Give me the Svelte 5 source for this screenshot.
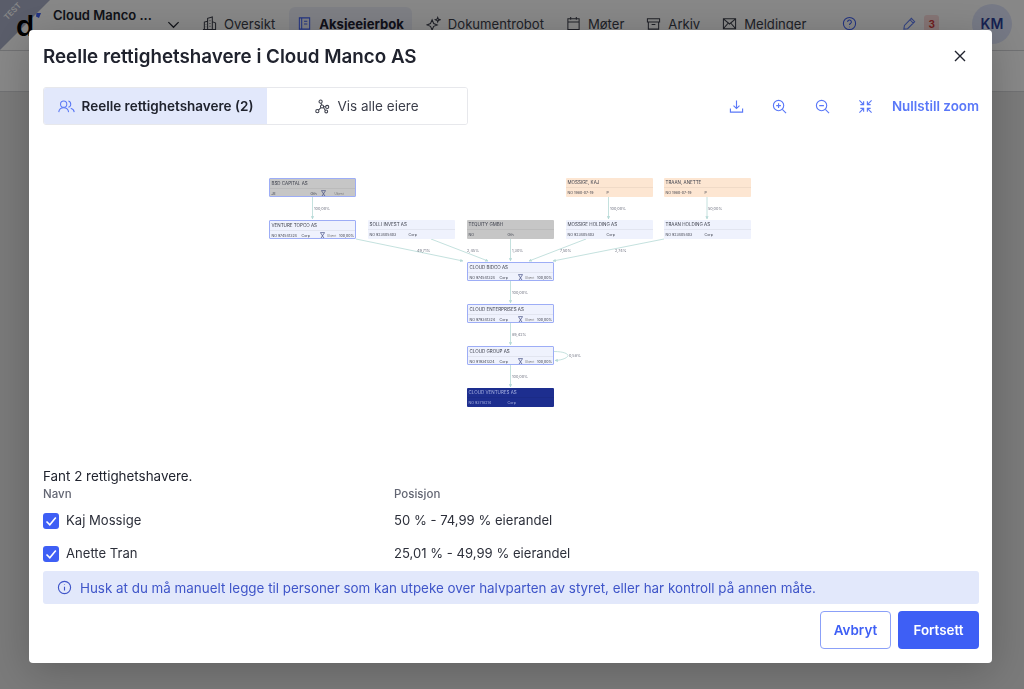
<script>
	const navItems = [
		{ label: 'Oversikt', icon: 'building' },
		{ label: 'Aksjeeierbok', icon: 'book', active: true },
		{ label: 'Dokumentrobot', icon: 'spark' },
		{ label: 'Møter', icon: 'calendar' },
		{ label: 'Arkiv', icon: 'archive' },
		{ label: 'Meldinger', icon: 'mail' }
	];

	const owners = [
		{ name: 'Kaj Mossige', position: '50 % - 74,99 % eierandel' },
		{ name: 'Anette Tran', position: '25,01 % - 49,99 % eierandel' }
	];

	// graph coordinates are relative to the canvas
	const ox = 29;
	const oy = 125;
	const nodes = [
		{ x: 269, y: 178, name: 'BSD CAPITAL AS', id: 'JE', type: 'Oth', kind: 'grey border', extra: 'Ukjent' },
		{ x: 566, y: 178, name: 'MOSSIGE, KAJ', id: 'NO 1980-07-19', type: 'P', kind: 'peach' },
		{ x: 664, y: 178, name: 'TRAAN, ANETTE', id: 'NO 1980-07-19', type: 'P', kind: 'peach' },
		{ x: 269, y: 220, name: 'VENTURE TOPCO AS', id: 'NO 974541324', type: 'Corp', kind: 'border', extra: 'Ukjent', pct: '100,00%' },
		{ x: 368, y: 220, name: 'SOLLI INVEST AS', id: 'NO 923405403', type: 'Corp', kind: '' },
		{ x: 467, y: 220, name: 'TEQUITY GMBH', id: 'NO', type: 'Oth', kind: 'grey' },
		{ x: 566, y: 220, name: 'MOSSIGE HOLDING AS', id: 'NO 923405403', type: 'Corp', kind: '' },
		{ x: 664, y: 220, name: 'TRAAN HOLDING AS', id: 'NO 923405403', type: 'Corp', kind: '' },
		{ x: 467, y: 262, name: 'CLOUD BIDCO AS', id: 'NO 974541324', type: 'Corp', kind: 'border', extra: 'Ukjent', pct: '100,00%' },
		{ x: 467, y: 304, name: 'CLOUD ENTERPRISES AS', id: 'NO 979341324', type: 'Corp', kind: 'border', extra: 'Ukjent', pct: '100,00%' },
		{ x: 467, y: 346, name: 'CLOUD GROUP AS', id: 'NO 919341324', type: 'Corp', kind: 'border', extra: 'Ukjent', pct: '100,00%' },
		{ x: 467, y: 388, name: 'CLOUD VENTURES AS', id: 'NO 93718214', type: 'Corp', kind: 'navy' }
	];
	const edges = [
		{ a: [312.5, 197], b: [312.5, 219], label: '100,00%', at: [314, 209.5] },
		{ a: [356, 239], b: [463, 261], label: '49,71%', at: [417, 251.5] },
		{ a: [431, 239], b: [488, 261], label: '2,45%', at: [467, 251.5] },
		{ a: [510.5, 239], b: [510.5, 261], label: '1,30%', at: [512, 251.5] },
		{ a: [586, 239], b: [529, 261], label: '7,50%', at: [560, 251.5] },
		{ a: [664, 239], b: [553, 261], label: '2,74%', at: [615, 251.5] },
		{ a: [608.5, 197], b: [608.5, 219], label: '100,00%', at: [610, 209.5] },
		{ a: [707, 197], b: [707, 219], label: '50,00%', at: [708, 209.5] },
		{ a: [510.5, 281], b: [510.5, 303], label: '100,00%', at: [512, 293.5] },
		{ a: [510.5, 323], b: [510.5, 345], label: '89,42%', at: [512, 335.5] },
		{ a: [510.5, 365], b: [510.5, 387], label: '100,00%', at: [512, 377.5] }
	];
</script>

<div class="page">
	<header class="topbar">
		<div class="ribbon"><span>TEST</span></div>
		<div class="logo">
			<span>d</span>
			<svg class="logo-mark" viewBox="0 0 6 6"><path d="M1.500 0h4.500L4 5 1 3.500z" /></svg>
		</div>
		<div class="company">
			<strong>Cloud Manco ...</strong>
			<small>Org.nr 912 345 678</small>
		</div>
		<svg class="chevron" viewBox="0 0 14 14"><path d="M1.500 4.500 7 10l5.500-5.500" /></svg>
		<nav>
			{#each navItems as item}
				<span class="nav-item" class:active={item.active}>
					<svg viewBox="0 0 16 16">
						{#if item.icon === 'building'}
							<path d="M1 14.500h14M2.500 14.500V6.500l3.500-1v9M6 14.500V2.500L11 1v13.500M11 6l3.500 1.500v7M8 5h1M8 8h1M8 11h1M4 9h.5M4 11.500h.5" />
						{:else if item.icon === 'book'}
							<path d="M2.500 2h11v12h-11zM5 2v12M7.500 5.500h3.500M7.500 8.500h3.500" />
						{:else if item.icon === 'spark'}
							<path d="M6.500 4 8.200 8 12 9.500 8.200 11 6.500 15 4.800 11 1 9.500 4.800 8zM12.500 1.500l.7 1.800 1.800.7-1.800.7-.7 1.800-.7-1.800-1.800-.7 1.800-.7z" />
						{:else if item.icon === 'calendar'}
							<path d="M2 3h12v11.500H2zM2 6.500h12M5 1v3M11 1v3" />
						{:else if item.icon === 'archive'}
							<path d="M1.500 3h13v3.500h-13zM2.500 6.500v7.500h11V6.500M6 9h4" />
						{:else}
							<path d="M1.500 3h13v10.500h-13zM1.500 3 8 8.500 14.500 3M1.500 13.500l5-5.800M14.500 13.500l-5-5.800" />
						{/if}
					</svg>
					{item.label}
				</span>
			{/each}
		</nav>
		<svg class="help" viewBox="0 0 16 16">
			<circle cx="8" cy="8" r="6.500" />
			<path d="M6 6.300a2 2 0 1 1 3 1.700c-.7.400-1 .8-1 1.500M8 11.500v.5" />
		</svg>
		<svg class="pen" viewBox="0 0 16 16"><path d="M2 14l.6-4L10 2.500l3.500 3.500L6 13.500zM8.500 4l3.500 3.500" /></svg>
		<span class="count">3</span>
		<span class="avatar">KM</span>
	</header>
	<div class="subbar"></div>
</div>

<div class="backdrop"></div>

<div class="modal" role="dialog">
	<div class="modal-head">
		<h2>Reelle rettighetshavere i Cloud Manco AS</h2>
		<svg class="close" viewBox="0 0 12 12"><path d="M1 1l10 10M11 1 1 11" /></svg>
	</div>

	<div class="toolbar">
		<div class="tabs">
			<button class="tab selected">
				<svg viewBox="0 0 18 14">
					<circle cx="6" cy="4.500" r="3.300" />
					<path d="M.8 13c.3-3 2.400-4.600 5.200-4.600s4.900 1.600 5.200 4.600M11 1.300a3.300 3.300 0 0 1 0 6.400M13.500 8.800c2 .6 3.400 2 3.700 4.200" />
				</svg>
				Reelle rettighetshavere (2)
			</button>
			<button class="tab">
				<svg viewBox="0 0 16 16">
					<circle cx="6" cy="2.800" r="1.700" /><circle cx="13" cy="8.500" r="1.700" />
					<circle cx="7.500" cy="8" r="1.700" /><circle cx="2.500" cy="13" r="1.700" /><circle cx="12" cy="13.300" r="1.500" />
					<path d="M6.400 4.500 7.200 6.300M9.200 8.200h2.100M6.300 9.300 3.700 11.800M9 9.100l1.900 3" />
				</svg>
				Vis alle eiere
			</button>
		</div>
		<div class="tools">
			<svg viewBox="0 0 16 16"><path d="M1.500 10v4h13v-4M8 1.500V10M4.800 7 8 10.200 11.200 7" /></svg>
			<svg viewBox="0 0 16 16"><circle cx="7" cy="7" r="5.500" /><path d="M11 11l4 4M7 4.500v5M4.500 7h5" /></svg>
			<svg viewBox="0 0 16 16"><circle cx="7" cy="7" r="5.500" /><path d="M11 11l4 4M4.500 7h5" /></svg>
			<svg viewBox="0 0 16 16"><path d="M1.500 1.500 6 6M6 2.500V6H2.500M14.500 1.500 10 6M10 2.500V6h3.500M1.500 14.500 6 10M6 13.500V10H2.500M14.500 14.500 10 10M10 13.500V10h3.500" /></svg>
			<span class="reset">Nullstill zoom</span>
		</div>
	</div>

	<div class="canvas">
		<svg class="edges" viewBox="{ox} {oy} 963 342">
			<defs>
				<marker id="arrow" markerWidth="4" markerHeight="4" refX="3.500" refY="2" orient="auto">
					<path d="M0 0 4 2 0 4z" fill="#b5d9d6" />
				</marker>
			</defs>
			{#each edges as e}
				<line x1={e.a[0]} y1={e.a[1]} x2={e.b[0]} y2={e.b[1]} marker-end="url(#arrow)" />
				<text x={e.at[0]} y={e.at[1]}>{e.label}</text>
			{/each}
			<path class="loop" d="M554 351.500C564 351.500 568 354 568 355.500S564 360 555 360.500" marker-end="url(#arrow)" />
			<text x="569" y="356.500">0,58%</text>
		</svg>
		{#each nodes as n}
			<div class="node {n.kind}" class:narrow={n.pct} style="left:{n.x - ox}px;top:{n.y - oy}px">
				<div class="node-name">{n.name}</div>
				<div class="node-info">
					<span class="node-id">{n.id}</span>
					<span class="node-type">{n.type}</span>
					{#if n.extra}
						<svg viewBox="0 0 6 8"><path d="M.5.500h5L1 7.500h4z" /></svg>
						<span class="node-extra">{n.extra}</span>
					{/if}
					{#if n.pct}<span class="node-pct">{n.pct}</span>{/if}
				</div>
			</div>
		{/each}
	</div>

	<p class="found">Fant 2 rettighetshavere.</p>
	<div class="table-head">
		<span>Navn</span>
		<span>Posisjon</span>
	</div>
	{#each owners as owner}
		<div class="row">
			<span class="person">
				<span class="check">
					<svg viewBox="0 0 16 16"><path d="M3.500 8.500 6.800 11.800 12.800 4.500" /></svg>
				</span>
				{owner.name}
			</span>
			<span>{owner.position}</span>
		</div>
	{/each}

	<div class="info">
		<svg viewBox="0 0 16 16"><circle cx="8" cy="8" r="6.500" /><path d="M8 7.200v4M8 4.700v.6" /></svg>
		Husk at du må manuelt legge til personer som kan utpeke over halvparten av styret, eller har kontroll på annen måte.
	</div>

	<div class="actions">
		<button class="btn outline">Avbryt</button>
		<button class="btn solid">Fortsett</button>
	</div>
</div>

<style>
	:global(body) {
		font-family: Inter, "Liberation Sans", sans-serif;
		background: #e6e6e6;
		overflow: hidden;
	}

	.page {
		height: 689px;
		color: #20232e;
	}

	.topbar {
		height: 51px;
		display: flex;
		align-items: center;
		position: relative;
		background: #fff;
		border-bottom: 1px solid #d4d5d8;
		box-sizing: border-box;
		font-size: 13.100px;
		padding-bottom: 3px;
	}

	.ribbon {
		position: absolute;
		left: 0;
		top: 0;
		width: 50px;
		height: 50px;
		background: #aab0c8;
		clip-path: polygon(0 0, 100% 0, 0 100%);
	}

	.ribbon span {
		position: absolute;
		left: 2px;
		top: 6px;
		font-size: 8px;
		font-weight: 600;
		color: #fff;
		transform: rotate(-45deg);
	}

	.logo {
		width: 37px;
		margin-left: 16px;
		height: 40px;
		font-size: 29px;
		font-weight: 600;
		line-height: 40px;
		position: relative;
		top: 2px;
		color: #000;
	}

	.logo-mark {
		position: absolute;
		left: 19px;
		top: 7px;
		width: 6px;
		height: 6px;
		fill: #3e5ff5;
	}

	.company {
		display: flex;
		flex-direction: column;
		width: 113px;
		margin-top: 1px;
		gap: 5px;
	}

	.company strong {
		font-size: 13px;
		font-weight: 600;
	}

	.company small {
		font-size: 11px;
		color: #7a7d88;
		white-space: nowrap;
	}

	.chevron {
		width: 13px;
		height: 13px;
		margin-left: 1px;
		fill: none;
		stroke: #20232e;
		stroke-width: 1.300;
		position: relative;
		top: 1px;
	}

	nav {
		display: flex;
		margin-left: 14px;
		gap: 6px;
	}

	.nav-item {
		display: flex;
		align-items: center;
		gap: 7px;
		height: 34px;
		padding: 0 8px;
		border-radius: 6px;
		color: #3b3e4a;
		white-space: nowrap;
	}

	.nav-item svg,
	.help,
	.pen {
		width: 15px;
		height: 15px;
		fill: none;
		stroke: currentColor;
		stroke-width: 1.100;
		flex: none;
	}

	.nav-item.active {
		background: #eef0f9;
		font-weight: 700;
		color: #1d2030;
	}

	.nav-item.active svg {
		color: #3e5ff5;
	}

	.help {
		margin-left: 28px;
		color: #3e5ff5;
	}

	.pen {
		margin-left: 45px;
		color: #5e7cf5;
	}

	.count {
		background: #fbdcdc;
		color: #d23b3b;
		font-size: 10px;
		font-weight: 700;
		padding: 3px 4px;
		margin-left: 7px;
		border-radius: 3px;
	}

	.avatar {
		width: 40px;
		height: 40px;
		margin-left: auto;
		margin-right: 12px;
		border-radius: 50%;
		background: #dfe5fb;
		color: #2b3f99;
		font-size: 14px;
		font-weight: 600;
		display: flex;
		align-items: center;
		justify-content: center;
	}

	.subbar {
		height: 40px;
		background: #fff;
		border-bottom: 1px solid #d4d5d8;
	}

	.backdrop {
		position: fixed;
		inset: 0;
		background: rgba(0, 0, 0, 0.47);
	}

	.modal {
		position: fixed;
		left: 29px;
		top: 30px;
		width: 963px;
		height: 633px;
		box-sizing: border-box;
		padding: 0 13px 0 14px;
		background: #fff;
		border-radius: 4px;
		box-shadow: 0 8px 40px rgba(0, 0, 0, 0.22);
		color: #20232e;
		font-size: 13.400px;
	}

	.modal-head {
		height: 57px;
		display: flex;
		align-items: center;
		justify-content: space-between;
		box-sizing: border-box;
		padding-bottom: 5px;
	}

	h2 {
		margin: 0;
		font-size: 18.800px;
		font-weight: 600;
	}

	.close {
		width: 12px;
		height: 12px;
		margin-right: 13px;
		fill: none;
		stroke: #20232e;
		stroke-width: 1.400;
	}

	.toolbar {
		height: 38px;
		display: flex;
		align-items: center;
		justify-content: space-between;
	}

	.tabs {
		display: flex;
		height: 38px;
		width: 425px;
		box-sizing: border-box;
		border: 1px solid #e7e8ec;
		border-radius: 3px;
		overflow: hidden;
	}

	.tab {
		display: flex;
		align-items: center;
		justify-content: center;
		gap: 7px;
		border: 0;
		padding: 0;
		flex: 1;
		background: #fff;
		color: #3b3e4a;
		font: 400 13.500px Inter, sans-serif;
	}

	.tab svg {
		width: 15px;
		height: 15px;
		fill: none;
		stroke: #3b3e4a;
		stroke-width: 1.100;
	}

	.tab.selected {
		flex: none;
		width: 223px;
		background: #e2e8fb;
		font-weight: 600;
		color: #20232e;
	}

	.tab.selected svg {
		width: 17px;
		stroke: #5a78f5;
	}

	.tools {
		display: flex;
		align-items: center;
		gap: 28px;
		color: #5a78f8;
	}

	.tools svg {
		width: 15px;
		height: 15px;
		fill: none;
		stroke: currentColor;
		stroke-width: 1.200;
	}

	.reset {
		margin-left: -9px;
		font-weight: 600;
	}

	.canvas {
		position: relative;
		height: 342px;
		margin: 0 -13px 0 -14px;
		filter: blur(0.35px);
	}

	.edges {
		position: absolute;
		left: 0;
		top: 0;
		width: 963px;
		height: 342px;
	}

	.edges line,
	.loop {
		stroke: #b5d9d6;
		stroke-width: 0.800;
		fill: none;
	}

	.edges text {
		font-size: 3.800px;
		fill: #6f7280;
	}

	.node {
		position: absolute;
		width: 87px;
		height: 19px;
		box-sizing: border-box;
		background: #eff2fd;
		border-radius: 1px;
		color: #3b3e4a;
		font-size: 3.600px;
		overflow: hidden;
	}

	.node.border {
		border: 1px solid #9dadf6;
	}

	.node.grey {
		background: #c6c6c6;
	}

	.node.peach {
		background: #fde6d2;
	}

	.node.navy {
		background: #1d2e8f;
		color: #aab4e2;
	}

	.node-name {
		height: 9px;
		line-height: 9px;
		padding-left: 1.500px;
		font-size: 4.500px;
		border-bottom: 0.500px solid rgba(0, 0, 0, 0.05);
	}

	.node-info {
		display: flex;
		align-items: center;
		height: 9px;
		padding: 0 1px 0 1.500px;
	}

	.node-id {
		width: 39px;
		white-space: nowrap;
	}

	.node-type {
		width: 10px;
	}

	.narrow .node-id {
		width: 30px;
	}

	.narrow .node-type {
		width: 18.500px;
	}

	.node-info svg {
		width: 5px;
		height: 7px;
		fill: none;
		stroke: #3f4a80;
		stroke-width: 0.800;
	}

	.node-extra {
		margin-left: 9px;
		font-size: 3px;
		color: #777;
	}

	.narrow .node-extra {
		margin-left: 2px;
	}

	.node-pct {
		margin-left: auto;
	}

	.found {
		margin: 0;
		height: 18px;
		line-height: 18px;
	}

	.table-head {
		display: grid;
		grid-template-columns: 351px 1fr;
		height: 19px;
		line-height: 18px;
		font-size: 11.500px;
		font-weight: 500;
		color: #636673;
	}

	.row {
		display: grid;
		grid-template-columns: 351px 1fr;
		align-items: center;
		height: 33px;
		line-height: 33px;
		font-size: 13.100px;
		color: #2c2f3a;
	}

	.person {
		display: flex;
		align-items: center;
		gap: 7px;
	}

	.check {
		width: 16px;
		height: 16px;
		border-radius: 3px;
		background: #3e5ff5;
		display: flex;
	}

	.check svg {
		fill: none;
		stroke: #fff;
		stroke-width: 1.600;
	}

	.info {
		display: flex;
		align-items: center;
		gap: 8px;
		height: 33px;
		margin-top: 1px;
		padding-left: 14px;
		border-radius: 3px;
		background: #e2e8fb;
		color: #3f55c9;
	}

	.info svg {
		width: 15px;
		height: 15px;
		fill: none;
		stroke: currentColor;
		stroke-width: 1.200;
	}

	.actions {
		display: flex;
		justify-content: flex-end;
		gap: 7px;
		margin-top: 7px;
	}

	.btn {
		height: 38px;
		border-radius: 4px;
		box-sizing: border-box;
		font: 600 13.400px Inter, sans-serif;
		padding: 0;
	}

	.outline {
		width: 71px;
		background: #fff;
		color: #3e5ff5;
		border: 1px solid #8ba0f8;
	}

	.solid {
		width: 81px;
		background: #3e5ff5;
		color: #fff;
		border: 0;
	}
</style>
